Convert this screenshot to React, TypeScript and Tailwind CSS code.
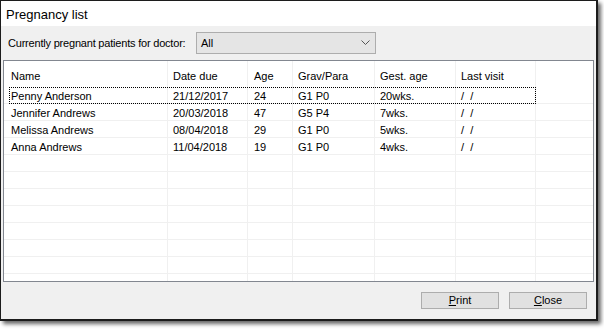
import React from 'react';

type Patient = {
  name: string;
  due: string;
  age: string;
  gravPara: string;
  gest: string;
  lastVisit: string;
};

const patients: Patient[] = [
  { name: 'Penny Anderson', due: '21/12/2017', age: '24', gravPara: 'G1 P0', gest: '20wks.', lastVisit: '/  /' },
  { name: 'Jennifer Andrews', due: '20/03/2018', age: '47', gravPara: 'G5 P4', gest: '7wks.', lastVisit: '/  /' },
  { name: 'Melissa Andrews', due: '08/04/2018', age: '29', gravPara: 'G1 P0', gest: '5wks.', lastVisit: '/  /' },
  { name: 'Anna Andrews', due: '11/04/2018', age: '19', gravPara: 'G1 P0', gest: '4wks.', lastVisit: '/  /' },
];

// fixed column widths, each includes its 1px divider on the right
const cols = [
  { key: 'name', label: 'Name', w: 'w-[164px]', pad: 'pl-[7px]' },
  { key: 'due', label: 'Date due', w: 'w-[80px]', pad: 'pl-[5px]' },
  { key: 'age', label: 'Age', w: 'w-[45px]', pad: 'pl-[6px]' },
  { key: 'gravPara', label: 'Grav/Para', w: 'w-[82px]', pad: 'pl-[5px]' },
  { key: 'gest', label: 'Gest. age', w: 'w-[81px]', pad: 'pl-[5px]' },
  { key: 'lastVisit', label: 'Last visit', w: 'w-[80px]', pad: 'pl-[5px]' },
] as const;

const EMPTY_ROWS = 8;

const App: React.FC = () => {
  return (
    <div className="w-[604px] h-[329px] bg-white overflow-hidden font-['Liberation_Sans',Arial,sans-serif] text-[11px] text-black">
      {/* dialog window */}
      <div className="w-[598px] h-[321px] flex flex-col border-l border-t border-r-2 border-b-2 border-[#1c1c1c] bg-[#f0f0f0] shadow-[3px_3px_4px_rgba(0,0,0,0.6)]">
        {/* title bar */}
        <div className="h-[25px] shrink-0 bg-white flex items-center pl-[5px] text-[13px] leading-none pt-[1px]">
          Pregnancy list
        </div>

        {/* doctor filter */}
        <div className="mt-[6px] h-[22px] flex items-center shrink-0">
          <span className="pl-[7px] w-[195px] tracking-[-0.2px]">Currently pregnant patients for doctor:</span>
          <div className="w-[180px] h-[22px] flex items-center justify-between border border-[#adadad] bg-[#e5e5e5] pl-[4px] pr-[4px]">
            <span>All</span>
            <svg width="9" height="6" viewBox="0 0 9 6" className="mr-[1px]">
              <polyline points="0.5,0.5 4.5,4.5 8.5,0.5" fill="none" stroke="#555" strokeWidth="1" />
            </svg>
          </div>
        </div>

        {/* patient list */}
        <div className="mt-[6px] mx-[2px] h-[222px] shrink-0 border border-[#828790] bg-white overflow-hidden">
          <div className="flex h-[26px]">
            {cols.map((c) => (
              <div key={c.key} className={`${c.w} ${c.pad} shrink-0 border-r border-[#f0f0f0] pt-[9px] leading-[13px]`}>
                {c.label}
              </div>
            ))}
            <div className="flex-1" />
          </div>

          {patients.map((p, i) => (
            <div key={p.name} className="relative flex h-[17px]">
              {cols.map((c) => (
                <div
                  key={c.key}
                  className={`${c.w} ${c.pad} shrink-0 border-r border-b border-[#f0f0f0] leading-[16px] pt-[1px] whitespace-pre`}
                >
                  {p[c.key]}
                </div>
              ))}
              <div className="flex-1 border-b border-[#f0f0f0]" />
              {i === 0 && (
                <div className="absolute left-[5px] top-0 w-[527px] h-[17px] border border-dotted border-black pointer-events-none" />
              )}
            </div>
          ))}

          {Array.from({ length: EMPTY_ROWS }).map((_, i) => (
            <div key={i} className="flex h-[17px]">
              {cols.map((c) => (
                <div key={c.key} className={`${c.w} shrink-0 border-r border-b border-[#f0f0f0]`} />
              ))}
              <div className="flex-1 border-b border-[#f0f0f0]" />
            </div>
          ))}
        </div>

        {/* buttons */}
        <div className="mt-[10px] flex justify-end gap-[10px] pr-[9px]">
          <button className="w-[78px] h-[17px] border border-[#adadad] bg-[#e1e1e1] leading-[15px]">
            <span className="underline underline-offset-1">P</span>rint
          </button>
          <button className="w-[78px] h-[17px] border border-[#adadad] bg-[#e1e1e1] leading-[15px]">
            <span className="underline underline-offset-1">C</span>lose
          </button>
        </div>
      </div>
    </div>
  );
};

export default App;
